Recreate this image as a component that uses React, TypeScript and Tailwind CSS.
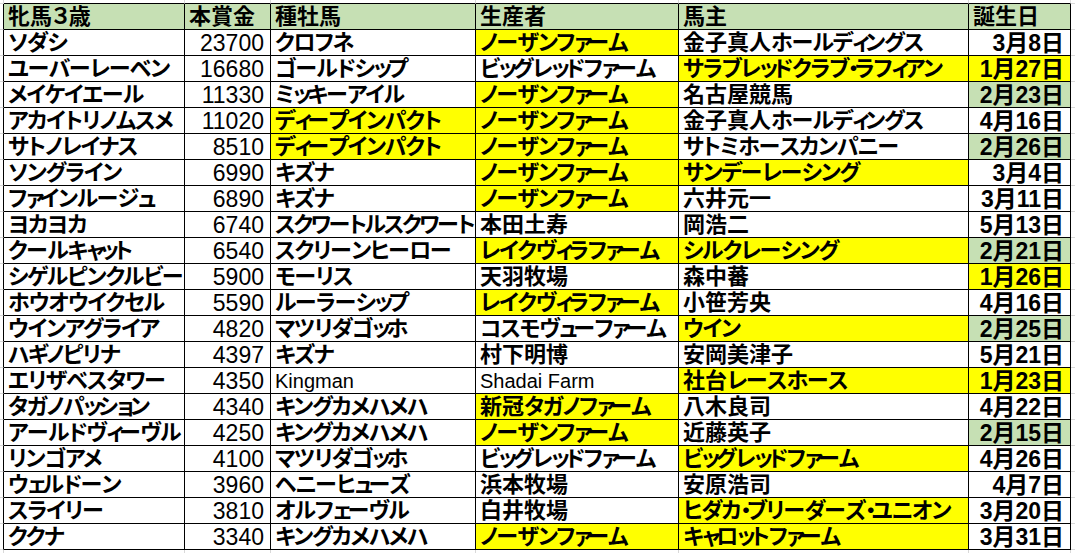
import React from "react";

type Fill = "y" | "g" | "";
type Kind = "jp" | "num" | "date" | "latin";

interface Cell {
  text: string;
  fill?: Fill;
  kind: Kind;
  squeeze?: boolean;
}

interface Horse {
  name: string;
  prize: string;
  sire: string;
  sireFill?: Fill;
  breeder: string;
  breederFill?: Fill;
  owner: string;
  ownerFill?: Fill;
  birth: string;
  birthFill?: Fill;
}

const horses: Horse[] = [
  { name: "ソダシ", prize: "23700", sire: "クロフネ", breeder: "ノーザンファーム", breederFill: "y", owner: "金子真人ホールディングス", birth: "3月8日" },
  { name: "ユーバーレーベン", prize: "16680", sire: "ゴールドシップ", breeder: "ビッグレッドファーム", owner: "サラブレッドクラブ・ラフィアン", ownerFill: "y", birth: "1月27日", birthFill: "y" },
  { name: "メイケイエール", prize: "11330", sire: "ミッキーアイル", breeder: "ノーザンファーム", breederFill: "y", owner: "名古屋競馬", birth: "2月23日", birthFill: "g" },
  { name: "アカイトリノムスメ", prize: "11020", sire: "ディープインパクト", sireFill: "y", breeder: "ノーザンファーム", breederFill: "y", owner: "金子真人ホールディングス", birth: "4月16日" },
  { name: "サトノレイナス", prize: "8510", sire: "ディープインパクト", sireFill: "y", breeder: "ノーザンファーム", breederFill: "y", owner: "サトミホースカンパニー", birth: "2月26日", birthFill: "g" },
  { name: "ソングライン", prize: "6990", sire: "キズナ", breeder: "ノーザンファーム", breederFill: "y", owner: "サンデーレーシング", ownerFill: "y", birth: "3月4日" },
  { name: "ファインルージュ", prize: "6890", sire: "キズナ", breeder: "ノーザンファーム", breederFill: "y", owner: "六井元一", birth: "3月11日" },
  { name: "ヨカヨカ", prize: "6740", sire: "スクワートルスクワート", breeder: "本田土寿", owner: "岡浩二", birth: "5月13日" },
  { name: "クールキャット", prize: "6540", sire: "スクリーンヒーロー", breeder: "レイクヴィラファーム", breederFill: "y", owner: "シルクレーシング", ownerFill: "y", birth: "2月21日", birthFill: "g" },
  { name: "シゲルピンクルビー", prize: "5900", sire: "モーリス", breeder: "天羽牧場", owner: "森中蕃", birth: "1月26日", birthFill: "y" },
  { name: "ホウオウイクセル", prize: "5590", sire: "ルーラーシップ", breeder: "レイクヴィラファーム", breederFill: "y", owner: "小笹芳央", birth: "4月16日" },
  { name: "ウインアグライア", prize: "4820", sire: "マツリダゴッホ", breeder: "コスモヴューファーム", owner: "ウイン", ownerFill: "y", birth: "2月25日", birthFill: "g" },
  { name: "ハギノピリナ", prize: "4397", sire: "キズナ", breeder: "村下明博", owner: "安岡美津子", birth: "5月21日" },
  { name: "エリザベスタワー", prize: "4350", sire: "Kingman", breeder: "Shadai Farm", owner: "社台レースホース", ownerFill: "y", birth: "1月23日", birthFill: "y" },
  { name: "タガノパッション", prize: "4340", sire: "キングカメハメハ", breeder: "新冠タガノファーム", breederFill: "y", owner: "八木良司", birth: "4月22日" },
  { name: "アールドヴィーヴル", prize: "4250", sire: "キングカメハメハ", breeder: "ノーザンファーム", breederFill: "y", owner: "近藤英子", birth: "2月15日", birthFill: "g" },
  { name: "リンゴアメ", prize: "4100", sire: "マツリダゴッホ", breeder: "ビッグレッドファーム", owner: "ビッグレッドファーム", ownerFill: "y", birth: "4月26日" },
  { name: "ウェルドーン", prize: "3960", sire: "ヘニーヒューズ", breeder: "浜本牧場", owner: "安原浩司", birth: "4月7日" },
  { name: "スライリー", prize: "3810", sire: "オルフェーヴル", breeder: "白井牧場", owner: "ヒダカ・ブリーダーズ・ユニオン", ownerFill: "y", birth: "3月20日" },
  { name: "ククナ", prize: "3340", sire: "キングカメハメハ", breeder: "ノーザンファーム", breederFill: "y", owner: "キャロットファーム", ownerFill: "y", birth: "3月31日" },
];

const header: Cell[] = ["牝馬３歳", "本賞金", "種牡馬", "生産者", "馬主", "誕生日"].map((t) => ({
  text: t,
  fill: "g" as Fill,
  kind: "jp" as Kind,
}));

const isLatin = (s: string) => /^[A-Za-z ]+$/.test(s);
// names long enough that the column would clip them
const isLong = (s: string) => Array.from(s).length >= 11 && !/[・]/.test(s) && !/[\u4e00-\u9fff]/.test(s);

function toCells(h: Horse): Cell[] {
  return [
    { text: h.name, kind: "jp" },
    { text: h.prize, kind: "num" },
    { text: h.sire, fill: h.sireFill, kind: isLatin(h.sire) ? "latin" : "jp", squeeze: isLong(h.sire) },
    { text: h.breeder, fill: h.breederFill, kind: isLatin(h.breeder) ? "latin" : "jp" },
    { text: h.owner, fill: h.ownerFill, kind: "jp" },
    { text: h.birth, fill: h.birthFill, kind: "date" },
  ];
}

function fillClass(fill?: Fill) {
  if (fill === "y") return "bg-[#ffff00]";
  if (fill === "g") return "bg-[#c6e0b4]";
  return "bg-white";
}

// MS PGothic-style kana are narrower than Noto's, so squeeze them a bit
const SMALL = "ァィゥェォッャュョヮヵヶ・";
function charClass(ch: string, squeeze?: boolean) {
  if (SMALL.includes(ch)) return "tracking-[-4.5px]";
  if (ch === "ー") return squeeze ? "tracking-[-1.5px]" : "tracking-[-0.5px]";
  if (/[\u30a0-\u30ff]/.test(ch)) return squeeze ? "tracking-[-2.4px]" : "tracking-[-1.3px]";
  return "";
}

function JpText({ text, squeeze }: { text: string; squeeze?: boolean }) {
  return (
    <>
      {Array.from(text).map((ch, i) => (
        <span key={i} className={charClass(ch, squeeze)}>
          {ch}
        </span>
      ))}
    </>
  );
}

function SheetCell({ cell }: { cell: Cell }) {
  const right = cell.kind === "num" || cell.kind === "date";
  const kindClass =
    cell.kind === "num"
      ? "text-[23px] font-normal"
      : cell.kind === "date"
        ? "text-[23px] font-bold"
        : cell.kind === "latin"
          ? "text-[20px] font-normal"
          : "text-[22px] font-bold";
  return (
    <div
      className={`flex items-end overflow-hidden whitespace-nowrap border-r border-b border-black leading-[24px] ${fillClass(cell.fill)} ${
        right ? "justify-end pr-[6px]" : "justify-start pl-[4px]"
      } ${kindClass}`}
    >
      <span>{cell.kind === "jp" ? <JpText text={cell.text} squeeze={cell.squeeze} /> : cell.text}</span>
    </div>
  );
}

// faint Excel gridline cells outside the bordered range
function Ghost({ cls }: { cls: string }) {
  return <div className={`bg-white ${cls}`} />;
}

export default function App() {
  const allRows: Cell[][] = [header, ...horses.map(toCells)];

  return (
    <div className="h-[553px] w-[1075px] overflow-hidden bg-white text-black">
      <div className="grid h-full w-full grid-cols-[4px_181px_86px_205px_203px_290px_102px_1fr] grid-rows-[4px_repeat(21,26px)_1fr] font-['Liberation_Sans','Noto_Sans_CJK_JP',sans-serif] [font-feature-settings:'palt']">
        {/* top gridline strip */}
        <Ghost cls="border-r border-b border-[#d9d9d9]" />
        {header.map((_, i) => (
          <Ghost key={`t${i}`} cls="border-r border-r-[#d9d9d9] border-b border-b-black" />
        ))}
        <Ghost cls="border-b border-[#d9d9d9]" />

        {allRows.map((row, r) => (
          <React.Fragment key={r}>
            <Ghost cls="border-r border-r-black border-b border-b-[#d9d9d9]" />
            {row.map((c, i) => (
              <SheetCell key={i} cell={c} />
            ))}
            <Ghost cls="border-b border-[#d9d9d9]" />
          </React.Fragment>
        ))}

        {/* bottom gridline strip */}
        <Ghost cls="border-r border-[#d9d9d9]" />
        {header.map((_, i) => (
          <Ghost key={`b${i}`} cls="border-r border-[#d9d9d9]" />
        ))}
        <Ghost cls="" />
      </div>
    </div>
  );
}
